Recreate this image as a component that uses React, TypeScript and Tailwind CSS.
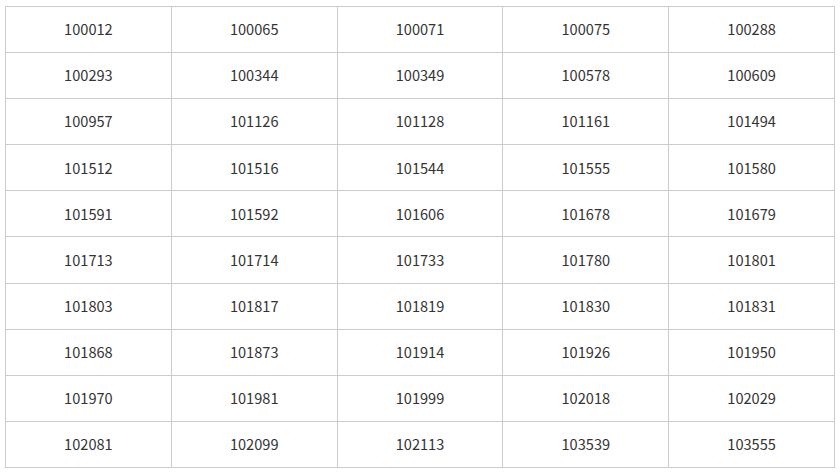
const data = [
  ["100012", "100065", "100071", "100075", "100288"],
  ["100293", "100344", "100349", "100578", "100609"],
  ["100957", "101126", "101128", "101161", "101494"],
  ["101512", "101516", "101544", "101555", "101580"],
  ["101591", "101592", "101606", "101678", "101679"],
  ["101713", "101714", "101733", "101780", "101801"],
  ["101803", "101817", "101819", "101830", "101831"],
  ["101868", "101873", "101914", "101926", "101950"],
  ["101970", "101981", "101999", "102018", "102029"],
  ["102081", "102099", "102113", "103539", "103555"],
];

export default function App() {
  return (
    <div className="bg-white pl-[5px] pt-[6px] w-[840px] h-[473px]">
      <table
        className="border-collapse w-[830px] text-[14.6px] text-[#333]"
        style={{ fontFamily: '"Noto Sans CJK JP", "Noto Sans", sans-serif' }}
      >
        <tbody>
          {data.map((row, i) => (
            <tr key={i} className="h-[46.1px]">
              {row.map((v) => (
                <td
                  key={v}
                  className="border border-[#cccccc] text-center align-middle w-[166px] p-0 leading-none"
                >
                  {v}
                </td>
              ))}
            </tr>
          ))}
        </tbody>
      </table>
    </div>
  );
}
